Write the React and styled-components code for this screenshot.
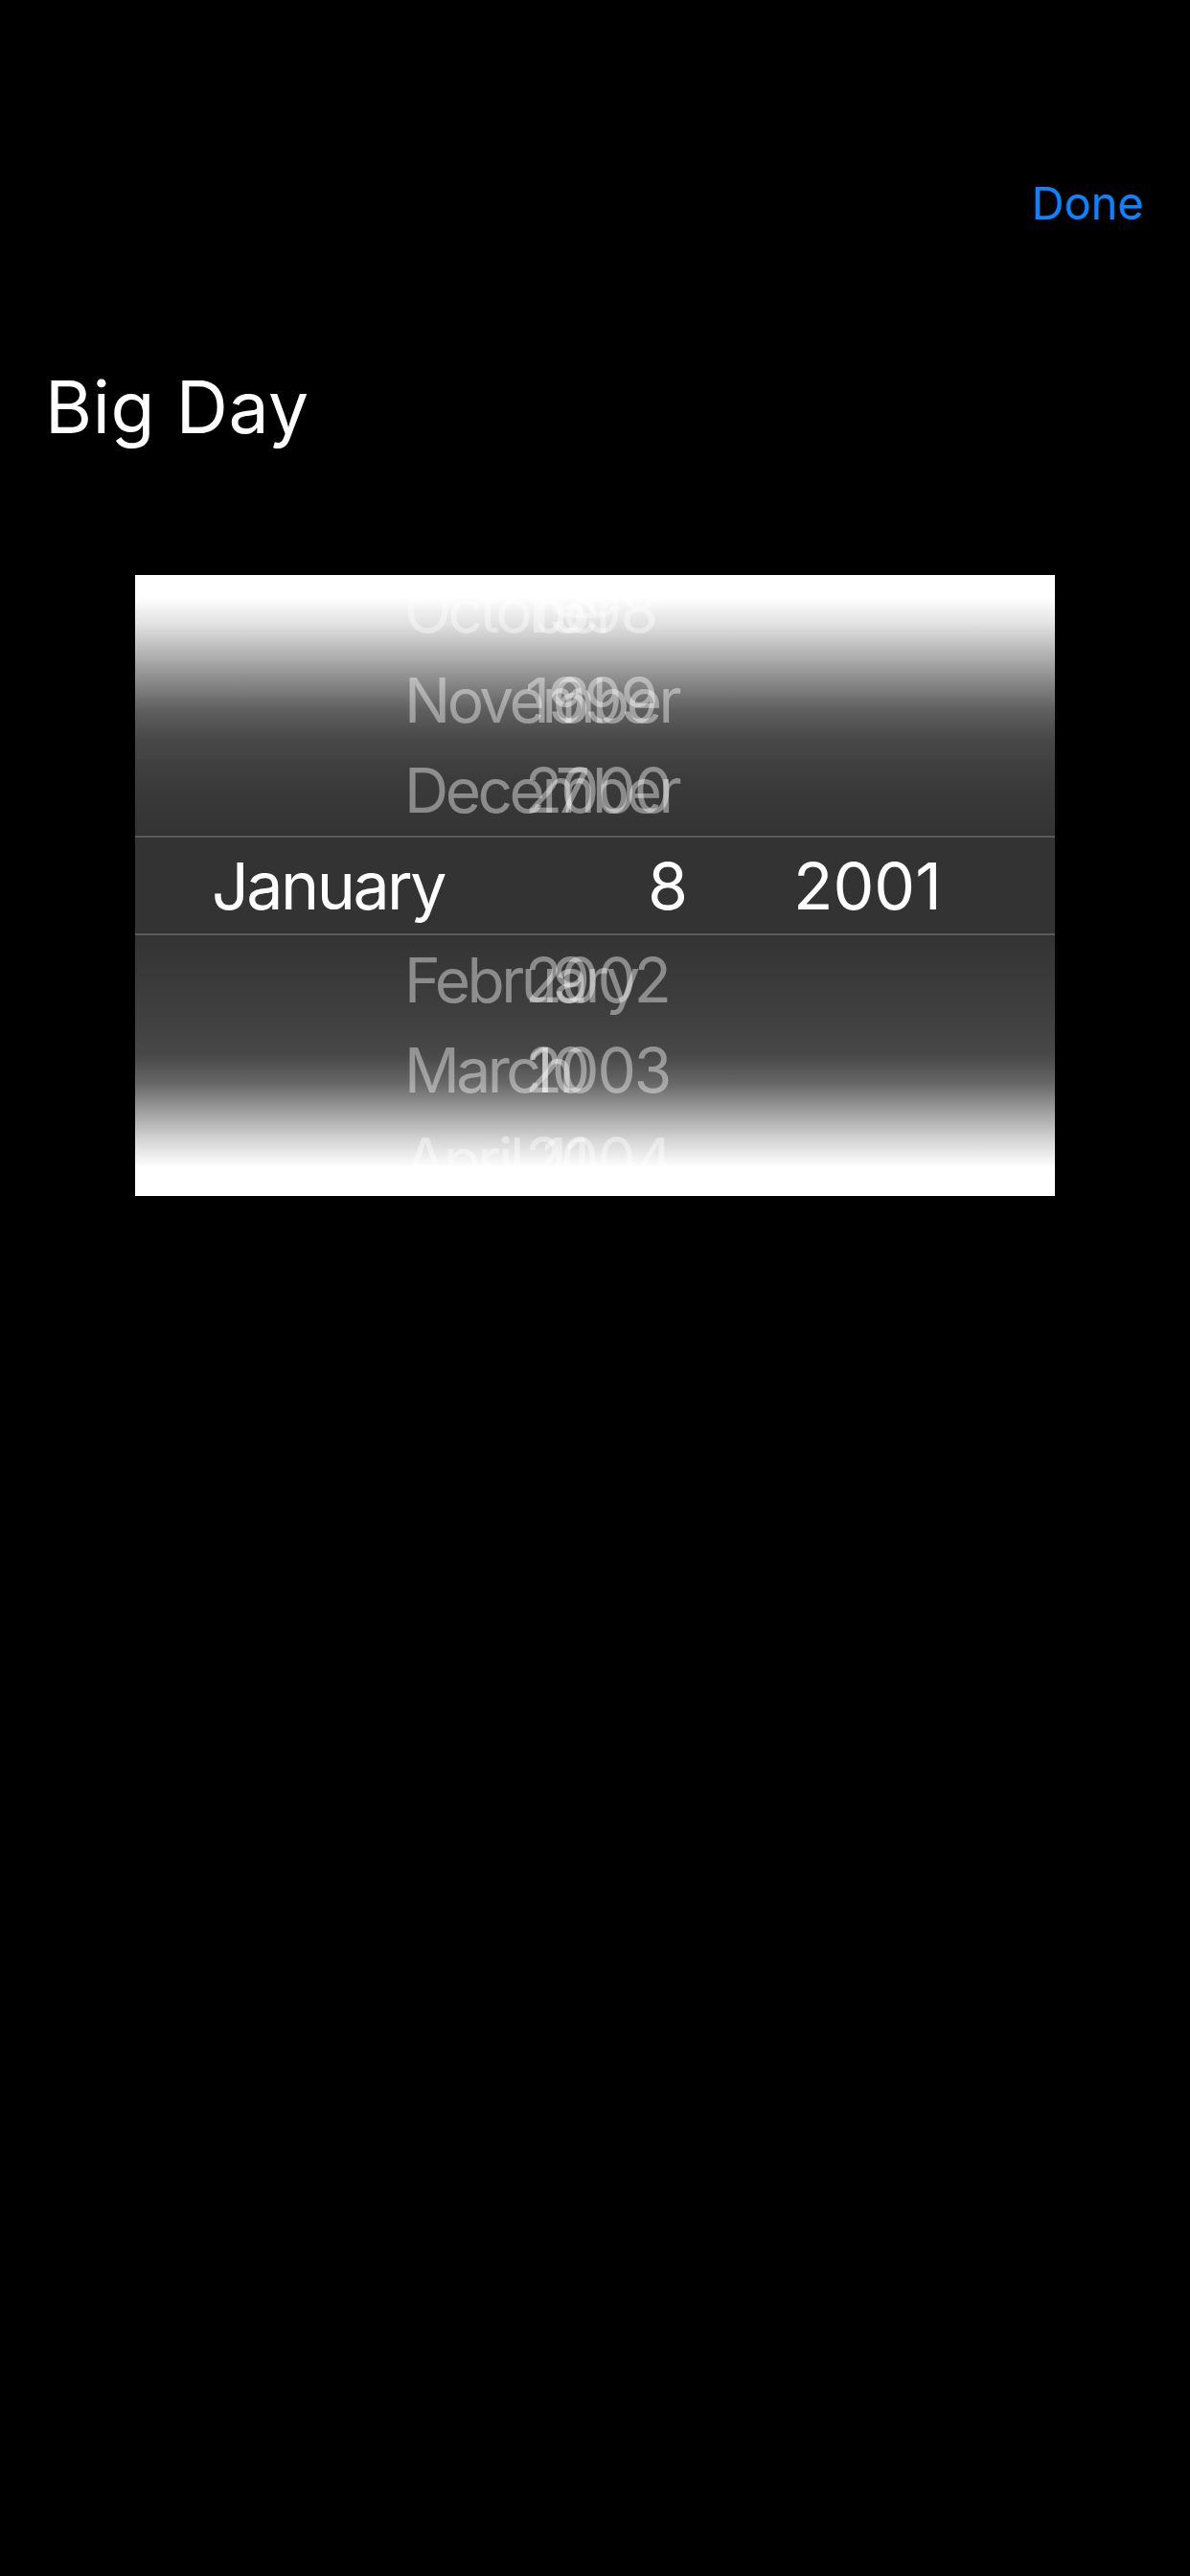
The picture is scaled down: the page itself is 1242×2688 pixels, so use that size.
import React from "react";
import styled, { createGlobalStyle } from "styled-components";

const GlobalStyle = createGlobalStyle`
  html, body {
    margin: 0;
    padding: 0;
    background: #000;
  }
  body {
    font-family: Inter, "Noto Sans", "Liberation Sans", sans-serif;
    -webkit-font-smoothing: antialiased;
  }
`;

const Screen = styled.div`
  width: 1242px;
  min-height: 2688px;
  background: #000;
  display: flex;
  flex-direction: column;
`;

const NavBar = styled.header`
  display: flex;
  justify-content: flex-end;
  padding: 188px 48px 0 0;
`;

const DoneButton = styled.button`
  background: none;
  border: 0;
  padding: 0;
  margin: 0;
  color: #0a84ff;
  font-family: Inter, "Noto Sans", sans-serif;
  font-size: 47px;
  font-weight: 400;
  line-height: 1;
  cursor: pointer;
`;

const Title = styled.h1`
  margin: 152px 0 0;
  padding-left: 47px;
  color: #fff;
  font-size: 75px;
  font-weight: 400;
  line-height: 1;
  letter-spacing: 0.6px;
`;

const Picker = styled.div`
  position: relative;
  margin: 138px auto 0;
  width: 960px;
  height: 648px;
  background: #333333;
  overflow: hidden;
  display: flex;
  flex-direction: column;
  justify-content: center;
`;

const GhostRow = styled.div`
  flex-shrink: 0;
  height: 94px;
  display: grid;
  grid-template-columns: 1fr;
  align-items: center;
  font-size: 64px;
  line-height: 1;
  color: rgba(255, 255, 255, 0.42);
`;

const GhostText = styled.span`
  grid-area: 1 / 1;
  white-space: nowrap;
  letter-spacing: ${(p) => p.$tracking || "-2px"};
`;

const GhostMonth = styled(GhostText)`
  justify-self: start;
  margin-left: 281px;
`;

const GhostDay = styled(GhostText)`
  justify-self: end;
  margin-right: 487px;
`;

const GhostYear = styled(GhostText)`
  justify-self: start;
  margin-left: 407px;
`;

const SelectedRow = styled.div`
  flex-shrink: 0;
  box-sizing: border-box;
  height: 104px;
  border-top: 2px solid #5a5a5a;
  border-bottom: 2px solid #5a5a5a;
  display: grid;
  grid-template-columns: 455px 152px 1fr;
  align-items: center;
  padding-left: 80px;
  font-size: 68px;
  line-height: 1;
  color: #fff;
`;

const SelectedCell = styled.span`
  white-space: nowrap;
  letter-spacing: ${(p) => p.$tracking || "0px"};
`;

const Fade = styled.div`
  position: absolute;
  left: 0;
  right: 0;
  height: 274px;
  pointer-events: none;
`;

const TopFade = styled(Fade)`
  top: 0;
  background: linear-gradient(
    to bottom,
    rgba(255, 255, 255, 1) 0px,
    rgba(255, 255, 255, 1) 24px,
    rgba(255, 255, 255, 0.85) 52px,
    rgba(255, 255, 255, 0.5) 100px,
    rgba(255, 255, 255, 0.22) 140px,
    rgba(255, 255, 255, 0.1) 172px,
    rgba(255, 255, 255, 0.04) 215px,
    rgba(255, 255, 255, 0) 274px
  );
`;

const BottomFade = styled(Fade)`
  bottom: 0;
  background: linear-gradient(
    to top,
    rgba(255, 255, 255, 1) 0px,
    rgba(255, 255, 255, 1) 30px,
    rgba(255, 255, 255, 0.8) 58px,
    rgba(255, 255, 255, 0.53) 88px,
    rgba(255, 255, 255, 0.25) 118px,
    rgba(255, 255, 255, 0.1) 148px,
    rgba(255, 255, 255, 0.05) 200px,
    rgba(255, 255, 255, 0.02) 250px,
    rgba(255, 255, 255, 0) 274px
  );
`;

const above = [
  { month: "October", day: "5", year: "1998" },
  { month: "November", day: "6", year: "1999" },
  { month: "December", day: "7", year: "2000" },
];

const below = [
  { month: "February", day: "9", year: "2002" },
  { month: "March", day: "10", year: "2003" },
  { month: "April", day: "11", year: "2004" },
];

function Ghost({ item }) {
  return (
    <GhostRow>
      <GhostMonth $tracking="-3.5px">{item.month}</GhostMonth>
      <GhostYear>{item.year}</GhostYear>
      <GhostDay>{item.day}</GhostDay>
    </GhostRow>
  );
}

export default function App() {
  return (
    <Screen>
      <GlobalStyle />
      <NavBar>
        <DoneButton>Done</DoneButton>
      </NavBar>
      <Title>Big Day</Title>
      <Picker>
        {above.map((item) => (
          <Ghost key={item.month} item={item} />
        ))}
        <SelectedRow>
          <SelectedCell $tracking="-2.5px">January</SelectedCell>
          <SelectedCell>8</SelectedCell>
          <SelectedCell>2001</SelectedCell>
        </SelectedRow>
        {below.map((item) => (
          <Ghost key={item.month} item={item} />
        ))}
        <TopFade />
        <BottomFade />
      </Picker>
    </Screen>
  );
}
